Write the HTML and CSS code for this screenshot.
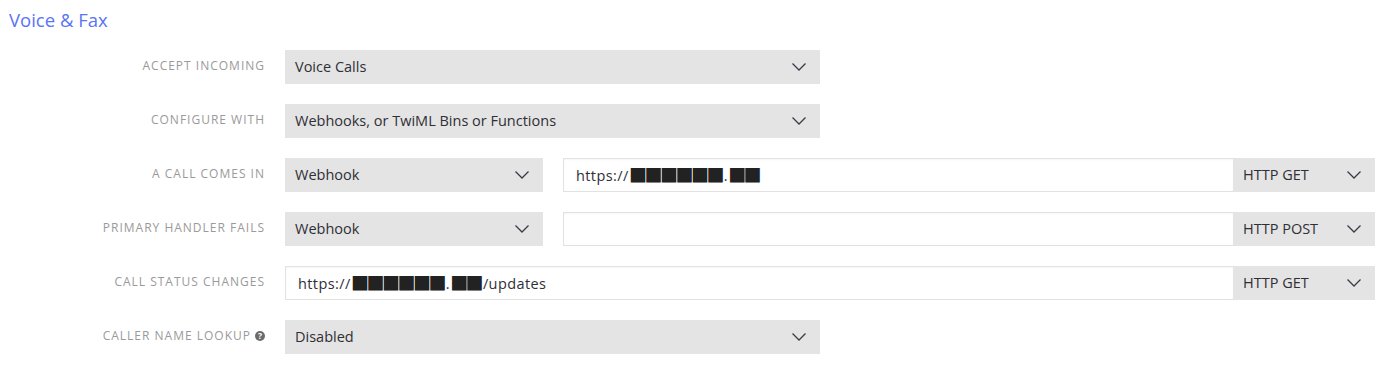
FILE: index.html
```html
<!DOCTYPE html>
<html>
<head>
<meta charset="utf-8">
<link rel="stylesheet" href="styles.css">
</head>
<body>
<section class="panel">
  <h2 class="title">Voice &amp; Fax</h2>
  <div class="rows">
    <div class="row">
      <label class="label">ACCEPT INCOMING</label>
      <div class="controls">
        <div class="select w-wide"><span>Voice Calls</span><svg class="chev" viewBox="0 0 14 8"><path d="M0.5 0.5 L7 7 L13.5 0.5"/></svg></div>
      </div>
    </div>
    <div class="row">
      <label class="label">CONFIGURE WITH</label>
      <div class="controls">
        <div class="select w-wide"><span>Webhooks, or TwiML Bins or Functions</span><svg class="chev" viewBox="0 0 14 8"><path d="M0.5 0.5 L7 7 L13.5 0.5"/></svg></div>
      </div>
    </div>
    <div class="row">
      <label class="label">A CALL COMES IN</label>
      <div class="controls">
        <div class="select w-mid"><span>Webhook</span><svg class="chev" viewBox="0 0 14 8"><path d="M0.5 0.5 L7 7 L13.5 0.5"/></svg></div>
        <div class="group">
          <div class="input"><span class="url">https://<span class="redact">██████</span>.<span class="redact">██</span></span></div>
          <div class="select w-method"><span>HTTP GET</span><svg class="chev" viewBox="0 0 14 8"><path d="M0.5 0.5 L7 7 L13.5 0.5"/></svg></div>
        </div>
      </div>
    </div>
    <div class="row">
      <label class="label">PRIMARY HANDLER FAILS</label>
      <div class="controls">
        <div class="select w-mid"><span>Webhook</span><svg class="chev" viewBox="0 0 14 8"><path d="M0.5 0.5 L7 7 L13.5 0.5"/></svg></div>
        <div class="group">
          <div class="input"></div>
          <div class="select w-method"><span>HTTP POST</span><svg class="chev" viewBox="0 0 14 8"><path d="M0.5 0.5 L7 7 L13.5 0.5"/></svg></div>
        </div>
      </div>
    </div>
    <div class="row">
      <label class="label">CALL STATUS CHANGES</label>
      <div class="controls">
        <div class="group full">
          <div class="input"><span class="url">https://<span class="redact">██████</span>.<span class="redact">██</span>/updates</span></div>
          <div class="select w-method"><span>HTTP GET</span><svg class="chev" viewBox="0 0 14 8"><path d="M0.5 0.5 L7 7 L13.5 0.5"/></svg></div>
        </div>
      </div>
    </div>
    <div class="row">
      <label class="label">CALLER NAME LOOKUP <svg class="help" viewBox="0 0 10 10"><circle cx="5" cy="5" r="5"/><text x="5" y="8.2" text-anchor="middle">?</text></svg></label>
      <div class="controls">
        <div class="select w-wide"><span>Disabled</span><svg class="chev" viewBox="0 0 14 8"><path d="M0.5 0.5 L7 7 L13.5 0.5"/></svg></div>
      </div>
    </div>
  </div>
</section>
</body>
</html>
```
FILE: styles.css
```css
html, body {
  margin: 0;
  padding: 0;
  background: #ffffff;
}
body {
  font-family: "Open Sans", "Liberation Sans", sans-serif;
  color: #2f2f36;
}
.panel {
  padding: 8px 0 0 9px;
}
.title {
  margin: 0 0 18px 0;
  font-size: 18.5px;
  font-weight: 400;
  line-height: 24px;
  color: #5a74f6;
}
.rows {
  display: flex;
  flex-direction: column;
  gap: 20px;
}
.row {
  display: grid;
  grid-template-columns: 256px 1fr;
  column-gap: 20px;
  align-items: center;
  height: 34px;
}
.label {
  justify-self: end;
  display: flex;
  align-items: center;
  gap: 4px;
  font-size: 12px;
  letter-spacing: 1px;
  color: #9a9a9a;
  margin-top: -3px;
}
.help {
  width: 10px;
  height: 10px;
}
.help circle {
  fill: #6b6b6b;
}
.help text {
  fill: #fff;
  font-size: 8.5px;
  font-weight: 700;
  font-family: "Open Sans", sans-serif;
  letter-spacing: 0;
}
.controls {
  display: flex;
  gap: 20px;
  height: 34px;
}
.select {
  box-sizing: border-box;
  height: 34px;
  background: #e4e4e4;
  display: flex;
  align-items: center;
  justify-content: space-between;
  padding: 0 14px 1px 10px;
  font-size: 14.5px;
  color: #2f2f36;
}
.chev {
  width: 14px;
  height: 8px;
  fill: none;
  stroke: #3a3a48;
  stroke-width: 1.3;
}
.w-wide { width: 535px; }
.w-mid { width: 258px; }
.w-method { width: 142px; flex: none; }
.group {
  display: flex;
  width: 812px;
}
.group.full {
  width: 1090px;
}
.input {
  box-sizing: border-box;
  flex: 1;
  height: 34px;
  background: #fff;
  border: 1px solid #e2e2e2;
  border-right: none;
  box-shadow: inset 0 1px 2px rgba(0,0,0,0.04);
  display: flex;
  align-items: center;
  padding: 0 12px 1px 12px;
  font-size: 14.5px;
  color: #2f2f36;
}
.url {
  letter-spacing: 0.4px;
}
.redact {
  font-family: "Noto Sans CJK JP", "DejaVu Sans", sans-serif;
  color: #222;
  font-size: 14.5px;
  letter-spacing: 1px;
  margin-left: 2px;
}
```
